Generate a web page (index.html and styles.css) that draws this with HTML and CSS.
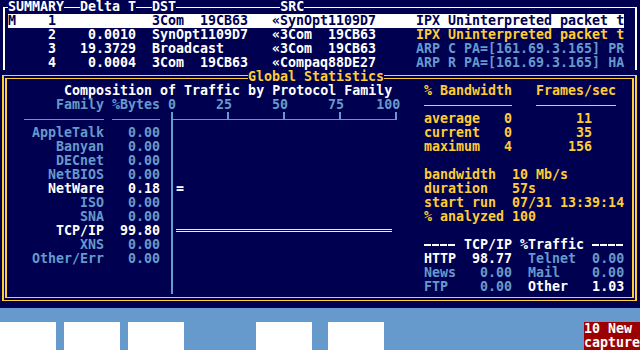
FILE: index.html
```html
<!DOCTYPE html>
<html lang="en">
<head>
    <meta charset="UTF-8">
    <meta name="viewport" content="width=device-width, initial-scale=1.0">
    <title>Sniffer - Global Statistics</title>
    <link rel="stylesheet" href="styles.css">
</head>
<body>
    <div class="screen">

        <div class="summary">
            <div class="summary-head">
                <span>SUMMARY</span>
                <span class="head-delta">Delta T</span>
                <span class="head-dst">DST</span>
                <span class="head-src">SRC</span>
            </div>
            <div class="pkt current">
                <span>M</span><span class="num">1</span><span class="num"></span><span class="addr">3Com  19CB63</span><span>«SynOpt1109D7</span><span>IPX Uninterpreted packet t</span>
            </div>
            <div class="pkt">
                <span></span><span class="num">2</span><span class="num">0.0010</span><span class="addr">SynOpt1109D7</span><span>«3Com  19CB63</span><span class="yellow">IPX Uninterpreted packet t</span>
            </div>
            <div class="pkt">
                <span></span><span class="num">3</span><span class="num">19.3729</span><span class="addr">Broadcast</span><span>«3Com  19CB63</span><span class="dim">ARP C PA=[161.69.3.165] PR</span>
            </div>
            <div class="pkt">
                <span></span><span class="num">4</span><span class="num">0.0004</span><span class="addr">3Com  19CB63</span><span>«Compaq88DE27</span><span class="dim">ARP R PA=[161.69.3.165] HA</span>
            </div>
        </div>

        <div class="stats">
            <h2 class="stats-title">Global Statistics</h2>
            <div class="stats-inner">

                <div class="composition">
                    <div class="comp-title">Composition of Traffic by Protocol Family</div>
                    <div class="fam-row dim">
                        <span class="name">Family</span><span class="pct">%Bytes</span><span class="scale">0     25     50     75    100</span>
                    </div>
                    <div class="fam-row">
                        <div class="name"><div class="rule name-rule"></div></div>
                        <div class="pct"><div class="rule"></div></div>
                        <div class="bar-cell axis"><i></i><i></i><i></i><i></i></div>
                    </div>
                    <div class="fam-row dim"><span class="name">AppleTalk</span><span class="pct">0.00</span><span class="bar-cell"></span></div>
                    <div class="fam-row dim"><span class="name">Banyan</span><span class="pct">0.00</span><span class="bar-cell"></span></div>
                    <div class="fam-row dim"><span class="name">DECnet</span><span class="pct">0.00</span><span class="bar-cell"></span></div>
                    <div class="fam-row dim"><span class="name">NetBIOS</span><span class="pct">0.00</span><span class="bar-cell"></span></div>
                    <div class="fam-row hi"><span class="name">NetWare</span><span class="pct">0.18</span><span class="bar-cell"><span class="bar-tiny">=</span></span></div>
                    <div class="fam-row dim"><span class="name">ISO</span><span class="pct">0.00</span><span class="bar-cell"></span></div>
                    <div class="fam-row dim"><span class="name">SNA</span><span class="pct">0.00</span><span class="bar-cell"></span></div>
                    <div class="fam-row hi"><span class="name">TCP/IP</span><span class="pct">99.80</span><span class="bar-cell"><div class="bar" style="width: 216px"></div></span></div>
                    <div class="fam-row dim"><span class="name">XNS</span><span class="pct">0.00</span><span class="bar-cell"></span></div>
                    <div class="fam-row dim"><span class="name">Other/Err</span><span class="pct">0.00</span><span class="bar-cell"></span></div>
                    <div class="fam-row"><span class="name"></span><span class="pct"></span><span class="bar-cell"></span></div>
                    <div class="fam-row"><span class="name"></span><span class="pct"></span><span class="bar-cell"></span></div>
                </div>

                <div class="rates">
                    <div class="line yellow">% Bandwidth   Frames/sec</div>
                    <div class="line rules"><span class="rule bw-rule"></span><span class="rule fs-rule"></span></div>
                    <div class="line yellow">average   0        11</div>
                    <div class="line yellow">current   0        35</div>
                    <div class="line yellow">maximum   4       156</div>
                    <div class="line"></div>
                    <div class="line yellow">bandwidth  10 Mb/s</div>
                    <div class="line yellow">duration   57s</div>
                    <div class="line yellow">start run  07/31 13:39:14</div>
                    <div class="line yellow">% analyzed 100</div>
                    <div class="line"></div>
                    <div class="line hi"><span class="dash">----</span> TCP/IP %Traffic <span class="dash">----</span></div>
                    <div class="line"><span class="hi">HTTP  98.77</span>  <span class="dim">Telnet  0.00</span></div>
                    <div class="line dim">News   0.00  Mail    0.00</div>
                    <div class="line"><span class="dim">FTP    0.00</span>  <span class="hi">Other   1.03</span></div>
                </div>

            </div>
        </div>

        <div class="fkeys">
            <div class="fkey"></div>
            <div class="fkey"></div>
            <div class="fkey"></div>
            <div class="fkey empty"></div>
            <div class="fkey"></div>
            <div class="fkey right-half"></div>
            <div class="fkey empty"></div>
            <div class="fkey empty"></div>
            <div class="fkey empty"></div>
            <div class="fkey alert">10 New<br>capture</div>
        </div>

    </div>
</body>
</html>
```

FILE: styles.css
```css
body {
    margin: 0;
    background: #000050;
    color: #ffffff;
    font-family: "DejaVu Sans Mono", monospace;
    font-size: 13.3px;
    font-weight: bold;
    line-height: 14px;
}
.screen {
    width: 640px;
    height: 350px;
    overflow: hidden;
}
.yellow {
    color: #ffcc33;
}
.dim {
    color: #6699cc;
}
.hi {
    color: #ffffff;
}

/* packet summary window */
.summary {
    margin: 7px 3px 0;
    height: 62px;
    border: 0 solid #ffffff;
    border-width: 1px 2px 0;
}
.summary-head {
    display: flex;
    height: 14px;
    margin: -8px 0 0 3px;
}
.summary-head span {
    background: #000050;
}
.summary-head .head-delta,
.summary-head .head-dst {
    margin-left: 16px;
}
.summary-head .head-src {
    margin-left: 104px;
}
.pkt {
    display: grid;
    grid-template-columns: 8px 40px 80px 136px 144px 208px;
    width: 616px;
    height: 14px;
    margin-left: 3px;
    white-space: pre;
}
.pkt.current {
    background: #ffffff;
    color: #000050;
}
.pkt .num {
    text-align: right;
}
.pkt .addr {
    padding-left: 16px;
}

/* global statistics window */
.stats {
    position: relative;
    margin: 5px 3px 0 2px;
    border: 0 solid #ffcc33;
    border-width: 1px 2px;
    padding: 2px 1px;
}
.stats-title {
    position: absolute;
    top: -6px;
    left: 244px;
    margin: 0;
    font-size: inherit;
    line-height: 14px;
    background: #000050;
    color: #ffcc33;
}
.stats-inner {
    display: grid;
    grid-template-columns: 416px 1fr;
    border: 0 solid #ffcc33;
    border-width: 1px 2px;
    padding: 5px 0 3px 1px;
}
.comp-title {
    height: 14px;
    padding-left: 56px;
}
.fam-row {
    display: grid;
    grid-template-columns: 96px 48px 1fr;
    column-gap: 8px;
    height: 14px;
    white-space: pre;
}
.fam-row .name,
.fam-row .pct {
    text-align: right;
}
.rule {
    height: 7px;
    border-bottom: 1px solid #6699cc;
}
.name-rule {
    margin-left: 16px;
}
.bar-cell {
    margin-left: 3px;
    border-left: 2px solid #6699cc;
}
.bar-cell.axis {
    display: flex;
    align-items: flex-start;
}
.axis i {
    display: block;
    box-sizing: border-box;
    flex: none;
    width: 56px;
    height: 8px;
    border-right: 2px solid #6699cc;
    border-bottom: 1px solid #6699cc;
}
.bar-tiny {
    padding-left: 3px;
}
.bar {
    height: 1px;
    margin: 5px 0 0 3px;
    border-top: 1px solid #e8e8ff;
    border-bottom: 1px solid #e8e8ff;
}

.rates .line {
    height: 14px;
    white-space: pre;
}
.rates .rules {
    display: flex;
    gap: 24px;
}
.bw-rule {
    width: 88px;
    border-color: #ffcc33;
}
.fs-rule {
    width: 80px;
    border-color: #ffcc33;
}
.dash {
    display: inline-block;
    width: 32px;
    height: 14px;
    vertical-align: top;
    color: transparent;
    background: repeating-linear-gradient(90deg, #ffffff 0 7px, transparent 7px 8px) 0 6px / 32px 2px no-repeat;
}

/* function keys */
.fkeys {
    display: flex;
    gap: 8px;
    height: 28px;
    margin-top: 7px;
    padding-top: 14px;
    background: #6699cc;
}
.fkey {
    width: 56px;
    flex: none;
    background: #ffffff;
}
.fkey.empty {
    background: none;
}
.fkey.right-half {
    margin-left: 8px;
}
.fkey.alert {
    background: #9c0000;
    color: #ffffff;
}
```
